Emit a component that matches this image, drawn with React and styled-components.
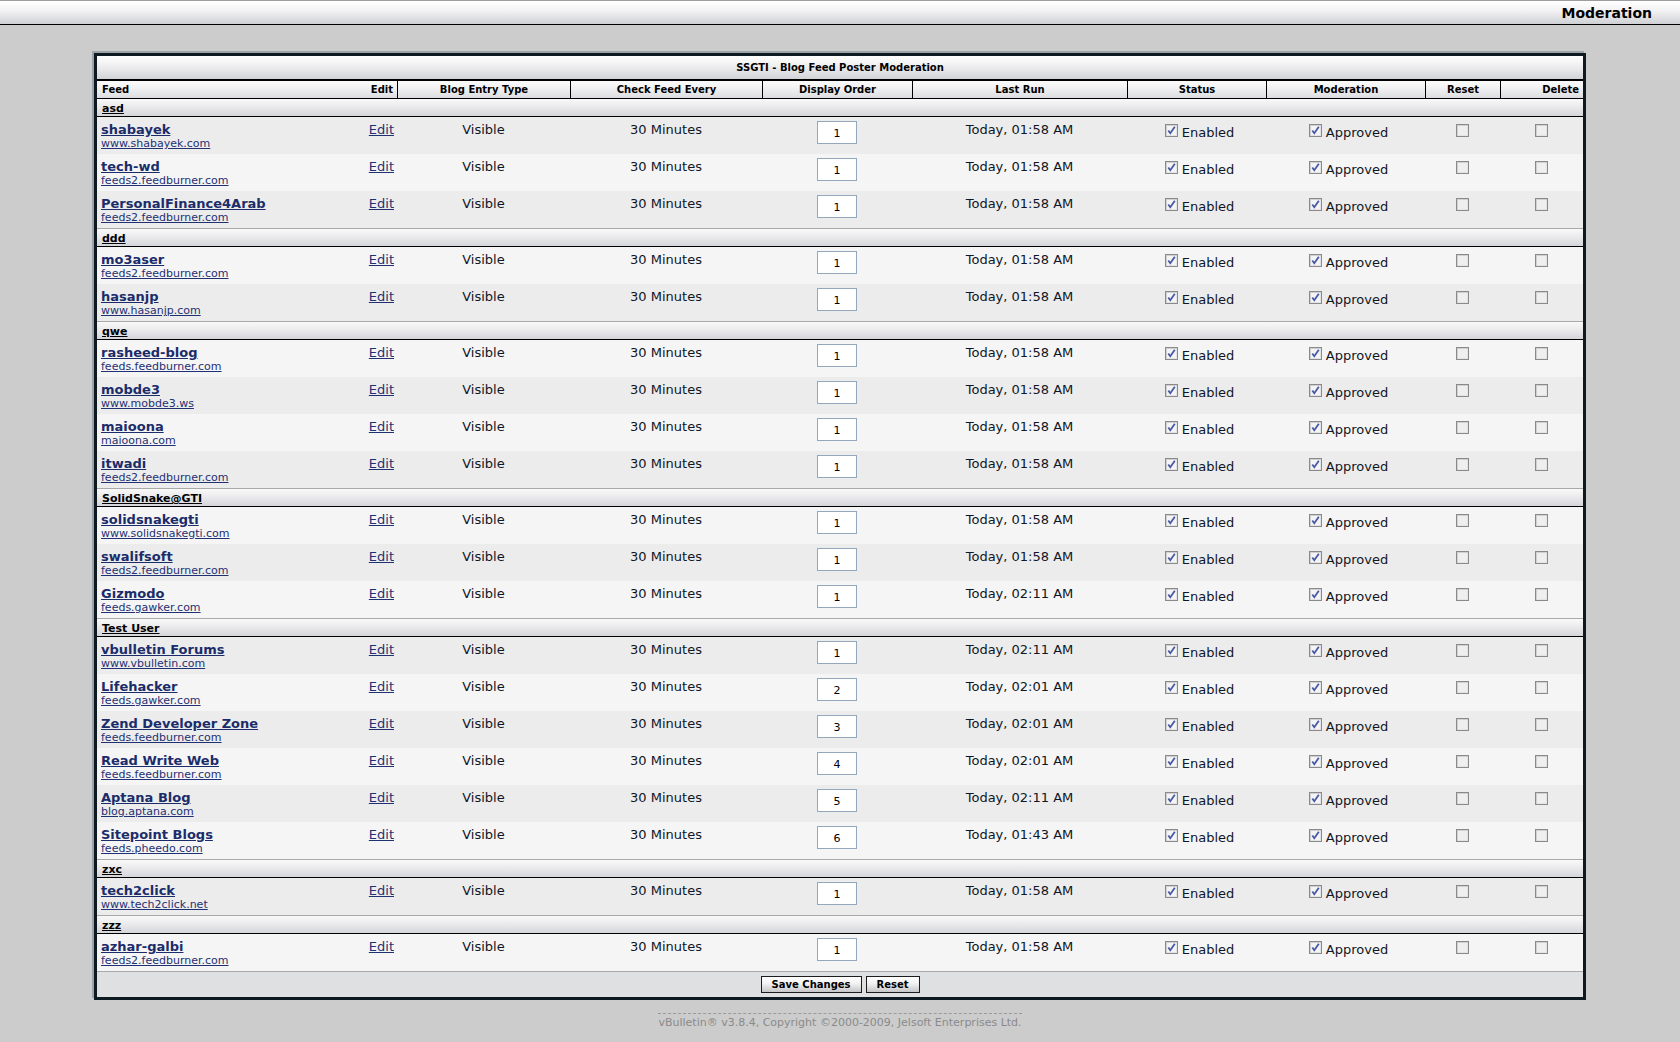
import React from 'react';
import styled, { createGlobalStyle } from 'styled-components';

const GlobalStyle = createGlobalStyle`
  html, body { margin: 0; padding: 0; background: #cccccc; }
  body { font-family: "DejaVu Sans", Verdana, sans-serif; color: #000; }
`;

const TopBar = styled.header`
  box-sizing: border-box;
  height: 25px;
  border-top: 1px solid #9d9d9d;
  border-bottom: 1px solid #000;
  background: linear-gradient(#ffffff, #f1f1f3 45%, #cfd0d4);
  display: flex;
  align-items: center;
  justify-content: flex-end;
  padding-right: 28px;
`;

const TopTitle = styled.h1`
  margin: 0;
  font: bold 14px "DejaVu Sans", Verdana, sans-serif;
  color: #000;
`;

const Frame = styled.div`
  box-sizing: border-box;
  width: 1492px;
  margin: 28px auto 0;
  border: 3px solid #0e1a21;
  box-shadow: -2px -2px 0 #9ba4a9;
`;

const Table = styled.table`
  width: 100%;
  border-collapse: separate;
  border-spacing: 0;
  table-layout: fixed;
`;

const TitleCell = styled.th`
  padding: 4px 4px 3px;
  background: linear-gradient(#ffffff, #eeeef0 45%, #d2d3d7);
  border-bottom: 2px solid #000;
  font: bold 10px/16px "DejaVu Sans", Verdana, sans-serif;
  text-align: center;
`;

const HeadCell = styled.th`
  padding: 0 ${(p) => (p.$align === 'right' ? '4px' : '5px')};
  font: bold 10px/17px "DejaVu Sans", Verdana, sans-serif;
  text-align: ${(p) => p.$align || 'center'};
  background: linear-gradient(#fcfcfc, #f0f0f2 45%, #dcdde0);
  border-bottom: 1px solid #000;
  border-left: ${(p) => (p.$sep ? '1px solid #000' : '0')};
`;

const GroupCell = styled.td`
  padding: 3px 5px 0;
  font: bold 11px/14px "DejaVu Sans", Verdana, sans-serif;
  background: linear-gradient(#f9f9f9, #ebebed 45%, #d5d6da);
  border-top: ${(p) => (p.$first ? '0' : '1px solid #a9a9a9')};
  border-bottom: 1px solid #000;
`;

const GroupLink = styled.a`
  color: #000;
  text-decoration: underline;
`;

const Row = styled.tr`
  background: ${(p) => (p.$alt ? '#f5f5f5' : '#ececec')};
`;

const Cell = styled.td`
  vertical-align: top;
  padding: ${(p) => p.$pad || '5px 4px 4px'};
  text-align: ${(p) => p.$align || 'center'};
  font: 13px/15px "DejaVu Sans", Verdana, sans-serif;
  color: #0f1626;
`;

const FeedTitle = styled.a`
  display: inline-block;
  font: bold 13px/15px "DejaVu Sans", Verdana, sans-serif;
  color: #1b2c6a;
  text-decoration: underline;
`;

const FeedUrl = styled.a`
  display: block;
  width: fit-content;
  font: 11px/13px "DejaVu Sans", Verdana, sans-serif;
  color: #1f3073;
  text-decoration: underline;
`;

const EditLink = styled.a`
  color: #1f3073;
  text-decoration: underline;
`;

const OrderInput = styled.input`
  box-sizing: border-box;
  width: 40px;
  height: 23px;
  margin: 0;
  padding: 2px 0 0;
  border: 1px solid #93a8bd;
  background: #fff;
  font: 11px "DejaVu Sans", Verdana, sans-serif;
  color: #000;
  text-align: center;
`;

const CheckLabel = styled.span`
  display: inline-flex;
  align-items: flex-start;
  gap: 4px;
  line-height: 15px;
`;

const CheckText = styled.span`
  margin-top: 1px;
`;

const BoxWrap = styled.span`
  display: inline-block;
  width: 13px;
  height: 13px;
  flex: none;
`;

const CheckBox = ({ checked }) => (
  <BoxWrap>
    <svg width="13" height="13" viewBox="0 0 13 13">
      <rect x="0.5" y="0.5" width="12" height="12" fill="#e4e4e4" stroke="#8a8a8a" />
      <rect x="2" y="2" width="9" height="9" fill={checked ? '#f4f4f6' : '#efefef'} />
      <rect x="1" y="1" width="11" height="1" fill="#d0d0d0" />
      <rect x="1" y="1" width="1" height="11" fill="#d0d0d0" />
      {checked && (
        <path d="M3.3 6.4 L5.3 9.2 L9.8 2.8" fill="none" stroke="#4759a5" strokeWidth="1.8" />
      )}
    </svg>
  </BoxWrap>
);

const FooterCell = styled.td`
  padding: 4px 0;
  background: #dfe0e2;
  border-top: 1px solid #a9a9a9;
`;

const ButtonBar = styled.div`
  display: flex;
  justify-content: center;
  gap: 4px;
`;

const Button = styled.button`
  box-sizing: border-box;
  height: 17px;
  padding: 0 10px;
  margin: 0;
  border: 1px solid #1c1c1c;
  background: linear-gradient(#ffffff, #f1f1f1 45%, #c6c6c8);
  font: bold 10px/15px "DejaVu Sans", Verdana, sans-serif;
  color: #000;
`;

const Copyright = styled.div`
  text-align: center;
  margin-top: 11px;
`;

const CopyText = styled.span`
  display: inline-block;
  border-top: 1px dashed #9a9a9a;
  padding-top: 2px;
  font: 11px/13px "DejaVu Sans", Verdana, sans-serif;
  color: #8a8a8a;
`;

const groups = [
  {
    name: 'asd',
    feeds: [
      ['shabayek', 'www.shabayek.com', '01:58', 1],
      ['tech-wd', 'feeds2.feedburner.com', '01:58', 1],
      ['PersonalFinance4Arab', 'feeds2.feedburner.com', '01:58', 1],
    ],
  },
  {
    name: 'ddd',
    feeds: [
      ['mo3aser', 'feeds2.feedburner.com', '01:58', 1],
      ['hasanjp', 'www.hasanjp.com', '01:58', 1],
    ],
  },
  {
    name: 'qwe',
    feeds: [
      ['rasheed-blog', 'feeds.feedburner.com', '01:58', 1],
      ['mobde3', 'www.mobde3.ws', '01:58', 1],
      ['maioona', 'maioona.com', '01:58', 1],
      ['itwadi', 'feeds2.feedburner.com', '01:58', 1],
    ],
  },
  {
    name: 'SolidSnake@GTI',
    feeds: [
      ['solidsnakegti', 'www.solidsnakegti.com', '01:58', 1],
      ['swalifsoft', 'feeds2.feedburner.com', '01:58', 1],
      ['Gizmodo', 'feeds.gawker.com', '02:11', 1],
    ],
  },
  {
    name: 'Test User',
    feeds: [
      ['vbulletin Forums', 'www.vbulletin.com', '02:11', 1],
      ['Lifehacker', 'feeds.gawker.com', '02:01', 2],
      ['Zend Developer Zone', 'feeds.feedburner.com', '02:01', 3],
      ['Read Write Web', 'feeds.feedburner.com', '02:01', 4],
      ['Aptana Blog', 'blog.aptana.com', '02:11', 5],
      ['Sitepoint Blogs', 'feeds.pheedo.com', '01:43', 6],
    ],
  },
  {
    name: 'zxc',
    feeds: [['tech2click', 'www.tech2click.net', '01:58', 1]],
  },
  {
    name: 'zzz',
    feeds: [['azhar-galbi', 'feeds2.feedburner.com', '01:58', 1]],
  },
];

const colWidths = [268, 32, 173, 192, 150, 215, 139, 159, 75, 83];

export default function App() {
  let idx = 0;
  const body = [];
  groups.forEach((g, gi) => {
    body.push(
      <tr key={`g${gi}`}>
        <GroupCell colSpan={10} $first={gi === 0}>
          <GroupLink href="#">{g.name}</GroupLink>
        </GroupCell>
      </tr>
    );
    g.feeds.forEach(([title, url, time, order], fi) => {
      const alt = idx % 2 === 1;
      idx += 1;
      body.push(
        <Row key={`r${gi}-${fi}`} $alt={alt}>
          <Cell $align="left">
            <FeedTitle href="#">{title}</FeedTitle>
            <FeedUrl href="#">{url}</FeedUrl>
          </Cell>
          <Cell $align="right" $pad="5px 3px 4px 0">
            <EditLink href="#">Edit</EditLink>
          </Cell>
          <Cell>Visible</Cell>
          <Cell>30 Minutes</Cell>
          <Cell $pad="4px">
            <OrderInput type="text" readOnly value={order} />
          </Cell>
          <Cell>Today, {time} AM</Cell>
          <Cell $pad="7px 1px 4px 7px">
            <CheckLabel>
              <CheckBox checked />
              <CheckText>Enabled</CheckText>
            </CheckLabel>
          </Cell>
          <Cell $pad="7px 1px 4px 7px">
            <CheckLabel>
              <CheckBox checked />
              <CheckText>Approved</CheckText>
            </CheckLabel>
          </Cell>
          <Cell $pad="7px 4px 4px">
            <CheckLabel>
              <CheckBox />
            </CheckLabel>
          </Cell>
          <Cell $pad="7px 4px 4px">
            <CheckLabel>
              <CheckBox />
            </CheckLabel>
          </Cell>
        </Row>
      );
    });
  });

  return (
    <>
      <GlobalStyle />
      <TopBar>
        <TopTitle>Moderation</TopTitle>
      </TopBar>
      <Frame>
        <Table>
          <colgroup>
            {colWidths.map((w, i) => (
              <col key={i} style={{ width: w }} />
            ))}
          </colgroup>
          <thead>
            <tr>
              <TitleCell colSpan={10}>SSGTI - Blog Feed Poster Moderation</TitleCell>
            </tr>
            <tr>
              <HeadCell $align="left">Feed</HeadCell>
              <HeadCell $align="right">Edit</HeadCell>
              <HeadCell $sep>Blog Entry Type</HeadCell>
              <HeadCell $sep>Check Feed Every</HeadCell>
              <HeadCell $sep>Display Order</HeadCell>
              <HeadCell $sep>Last Run</HeadCell>
              <HeadCell $sep>Status</HeadCell>
              <HeadCell $sep>Moderation</HeadCell>
              <HeadCell $sep>Reset</HeadCell>
              <HeadCell $sep $align="right">Delete</HeadCell>
            </tr>
          </thead>
          <tbody>{body}</tbody>
          <tfoot>
            <tr>
              <FooterCell colSpan={10}>
                <ButtonBar>
                  <Button type="button">Save Changes</Button>
                  <Button type="button">Reset</Button>
                </ButtonBar>
              </FooterCell>
            </tr>
          </tfoot>
        </Table>
      </Frame>
      <Copyright>
        <CopyText>vBulletin® v3.8.4, Copyright ©2000-2009, Jelsoft Enterprises Ltd.</CopyText>
      </Copyright>
    </>
  );
}
